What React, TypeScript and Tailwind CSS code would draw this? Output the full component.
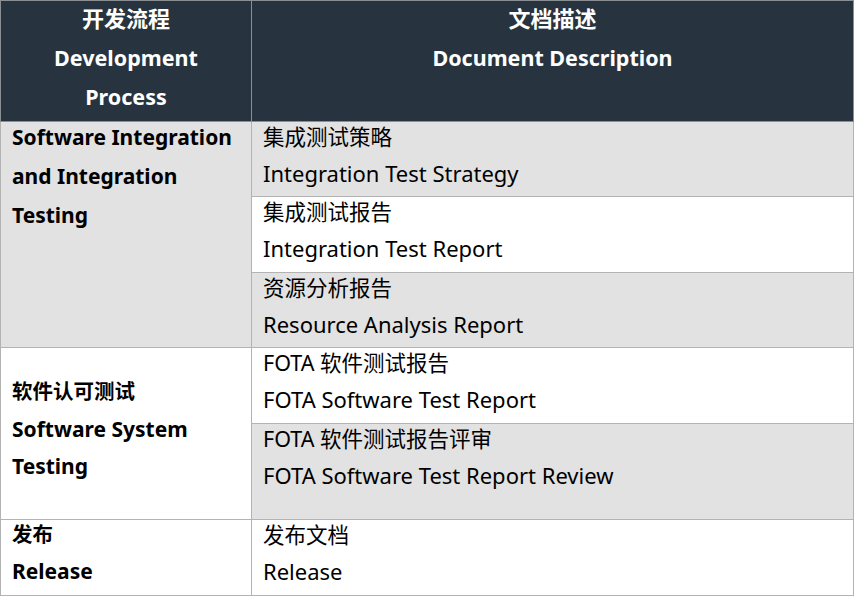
const font = { fontFamily: '"Noto Sans", "Noto Sans CJK SC", sans-serif' };

type Sub = { zh: string; en: string; gray: boolean; h: string };

const groups: {
  zh?: string;
  en: string[];
  gray: boolean;
  pad: string;
  lh: string;
  subs: Sub[];
}[] = [
  {
    en: ["Software Integration", "and Integration", "Testing"],
    gray: true,
    pad: "-mt-[4px]",
    lh: "h-[39px] leading-[39px]",
    subs: [
      { zh: "集成测试策略", en: "Integration Test Strategy", gray: true, h: "h-[75px]" },
      { zh: "集成测试报告", en: "Integration Test Report", gray: false, h: "h-[76px]" },
      { zh: "资源分析报告", en: "Resource Analysis Report", gray: true, h: "h-[75px]" },
    ],
  },
  {
    zh: "软件认可测试",
    en: ["Software System", "Testing"],
    gray: false,
    pad: "mt-[25px]",
    lh: "h-[37.5px] leading-[37.5px]",
    subs: [
      { zh: "FOTA 软件测试报告", en: "FOTA Software Test Report", gray: false, h: "h-[76px]" },
      { zh: "FOTA 软件测试报告评审", en: "FOTA Software Test Report Review", gray: true, h: "h-[96px]" },
    ],
  },
  {
    zh: "发布",
    en: ["Release"],
    gray: false,
    pad: "-mt-[4px]",
    lh: "h-[37px] leading-[37px]",
    subs: [{ zh: "发布文档", en: "Release", gray: false, h: "h-[76px]" }],
  },
];

export default function App() {
  return (
    <div className="w-[856px] h-[598px] bg-white text-black overflow-hidden" style={font}>
      <table className="w-[854px] border-collapse table-fixed border border-[#b3b3b3]">
        <colgroup>
          <col className="w-[251px]" />
          <col />
        </colgroup>
        <thead>
          <tr className="h-[121px] bg-[#27333e] text-white font-bold text-[21.5px] align-top">
            <th className="border border-[#8a8f94] p-0 text-center font-bold">
              <div className="-mt-[2px]">
                <div className="h-[39px] leading-[39px] text-[22px]">开发流程</div>
                <div className="h-[39px] leading-[39px]">Development</div>
                <div className="h-[39px] leading-[39px]">Process</div>
              </div>
            </th>
            <th className="border border-[#8a8f94] p-0 text-center font-bold">
              <div className="-mt-[2px]">
                <div className="h-[39px] leading-[39px] text-[22px]">文档描述</div>
                <div className="h-[39px] leading-[39px]">Document Description</div>
              </div>
            </th>
          </tr>
        </thead>
        <tbody>
          {groups.map((g, gi) =>
            g.subs.map((s, si) => (
              <tr key={`${gi}-${si}`} className={s.h}>
                {si === 0 && (
                  <td
                    rowSpan={g.subs.length}
                    className={`border border-[#b3b3b3] px-[11px] py-0 align-top font-bold text-[21px] ${
                      g.gray ? "bg-[#e2e2e2]" : "bg-white"
                    }`}
                  >
                    <div className={g.pad}>
                      {g.zh && <div className={`${g.lh} text-[20.5px]`}>{g.zh}</div>}
                      {g.en.map((l) => (
                        <div key={l} className={`${g.lh} whitespace-nowrap`}>
                          {l}
                        </div>
                      ))}
                    </div>
                  </td>
                )}
                <td
                  className={`border border-[#b3b3b3] px-[11px] py-0 align-top text-[22px] ${
                    s.gray ? "bg-[#e2e2e2]" : "bg-white"
                  }`}
                >
                  <div className="-mt-[2px] h-[34px] leading-[34px] text-[21.5px]">{s.zh}</div>
                  <div className="h-[38px] leading-[38px] whitespace-nowrap">{s.en}</div>
                </td>
              </tr>
            ))
          )}
        </tbody>
      </table>
    </div>
  );
}
